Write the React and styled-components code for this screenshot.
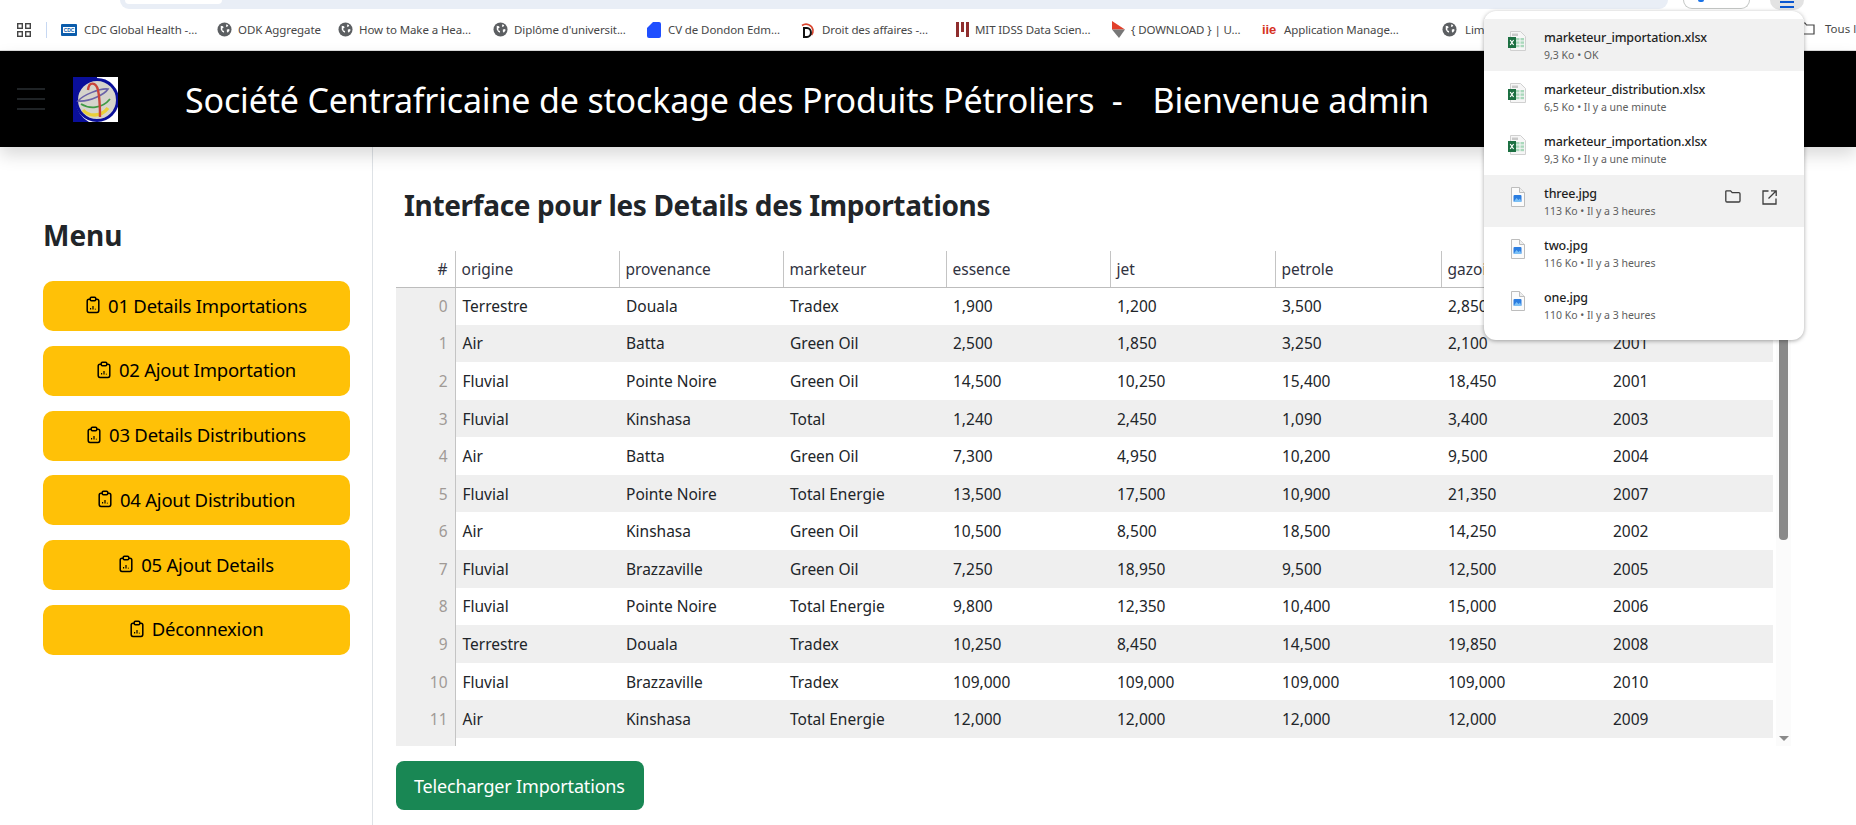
import React from 'react';
import styled, { createGlobalStyle } from 'styled-components';

const GlobalStyle = createGlobalStyle`
  html, body {
    margin: 0;
    height: 100%;
    overflow: hidden;
    background: #fff;
    font-family: "Noto Sans", "Open Sans", sans-serif;
    color: #212529;
  }
  * { box-sizing: border-box; }
`;

const TopStrip = styled.div`
  height: 10px;
  display: flex;
  align-items: flex-start;
  overflow: hidden;
  background: #fff;
  padding-left: 120px;
`;

const AddressPill = styled.div`
  width: 1548px;
  height: 9px;
  background: #e9eef6;
  border-radius: 0 0 14px 14px;
  padding-left: 5px;
`;

const AddressChip = styled.div`
  width: 97px;
  height: 4px;
  background: #fff;
  border-radius: 0 0 10px 10px;
`;

const ProfileChip = styled.div`
  width: 67px;
  height: 9px;
  margin-left: 15px;
  border: 1px solid #c4c7c5;
  border-top: none;
  border-radius: 0 0 14px 14px;
  position: relative;
  &::after {
    content: '';
    position: absolute;
    left: 14px;
    top: 0;
    width: 6px;
    height: 2px;
    background: #1a73e8;
    border-radius: 0 0 3px 3px;
  }
`;

const MenuCircle = styled.div`
  width: 34px;
  height: 10px;
  margin-left: 20px;
  background: #e3e3e3;
  border-radius: 0 0 17px 17px;
  display: flex;
  flex-direction: column;
  align-items: center;
  gap: 3px;
  padding-top: 1px;
  &::before, &::after {
    content: '';
    width: 14px;
    height: 2px;
    background: #0b57d0;
  }
`;

const BookmarkBar = styled.div`
  height: 41px;
  padding-bottom: 1px;
  display: flex;
  align-items: center;
  padding-left: 17px;
  border-bottom: 1px solid #dcdcdc;
  background: #fff;
  white-space: nowrap;
`;

const Separator = styled.div`
  width: 1px;
  height: 16px;
  background: #c7d8f2;
  margin: 0 14px 0 15px;
`;

const Bookmark = styled.div`
  width: ${({ $w }) => $w}px;
  flex: none;
  display: flex;
  align-items: center;
  gap: ${({ $gap }) => $gap || 5}px;
  font-size: 11.5px;
  letter-spacing: -0.1px;
  color: #474747;
  svg {
    flex: none;
  }
`;

const AllBookmarks = styled.div`
  position: absolute;
  left: 1799px;
  top: 21px;
  display: flex;
  align-items: center;
  gap: 10px;
  font-size: 11.5px;
  color: #474747;
  white-space: nowrap;
`;

const Header = styled.header`
  height: 96px;
  background: #000;
  display: flex;
  align-items: center;
  padding-left: 17px;
  position: relative;
  z-index: 1;
  box-shadow: 0 8px 16px rgba(0, 0, 0, 0.15);
`;

const Burger = styled.div`
  width: 28px;
  height: 22px;
  margin-right: 28px;
  display: flex;
  flex-direction: column;
  justify-content: space-between;
  span {
    height: 2px;
    background: #1f2326;
  }
`;

const Title = styled.h1`
  margin: 2px 0 0 67px;
  font-size: 34px;
  font-weight: 400;
  color: #fff;
  white-space: pre;
  letter-spacing: -0.17px;
`;

const Welcome = styled.span`
  margin-left: 4px;
`;

const Main = styled.main`
  display: flex;
  height: 678px;
`;

const Sidebar = styled.aside`
  width: 373px;
  flex: none;
  border-right: 1px solid #dee2e6;
  padding: 71px 22px 0 43px;
`;

const MenuTitle = styled.h2`
  margin: 0 0 29px 0;
  font-size: 28px;
  line-height: 34px;
  font-weight: 700;
  color: #212529;
`;

const MenuList = styled.nav`
  display: flex;
  flex-direction: column;
  gap: 14.8px;
`;

const MenuButton = styled.a`
  height: 50px;
  padding-bottom: 2px;
  background: #ffc107;
  border-radius: 10px;
  color: #000;
  font-size: 18.5px;
  display: flex;
  align-items: center;
  justify-content: center;
  gap: 8px;
  letter-spacing: -0.22px;
`;

const Content = styled.section`
  flex: 1;
  min-width: 0;
  padding: 41px 0 0 23px;
`;

const PageTitle = styled.h2`
  margin: 0 0 29px 8px;
  font-size: 28px;
  line-height: 34px;
  font-weight: 700;
  letter-spacing: -0.35px;
  color: #212529;
`;

const TableFrame = styled.div`
  display: flex;
  height: 495px;
  overflow: hidden;
`;

const DataTable = styled.table`
  width: 1377px;
  flex: none;
  border-collapse: collapse;
  table-layout: fixed;
  font-size: 15.5px;
  align-self: flex-start;
`;

const HeadCell = styled.th`
  height: 36px;
  padding: 0 6px;
  font-weight: 400;
  text-align: ${({ $index }) => ($index ? 'right' : 'left')};
  padding-right: ${({ $index }) => ($index ? '7px' : '6px')};
  border-left: ${({ $index }) => ($index ? 'none' : '1px solid #c4c4c4')};
  border-bottom: 1px solid #bdbdbd;
  color: #31333f;
  white-space: nowrap;
  overflow: hidden;
`;

const Row = styled.tr`
  height: 37.58px;
  background: ${({ $striped }) => ($striped ? '#efefef' : '#fff')};
`;

const Cell = styled.td`
  padding: 0 7px;
  color: #212529;
  white-space: nowrap;
  overflow: hidden;
`;

const IndexCell = styled.td`
  padding: 0 7px;
  text-align: right;
  color: #a09a96;
  background: #efefef;
  border-right: 1px solid #c4c4c4;
`;

const ScrollTrack = styled.div`
  width: 15px;
  margin-left: 3px;
  background: #fbfbfb;
  position: relative;
`;

const ScrollThumb = styled.div`
  position: absolute;
  left: 3px;
  top: 15px;
  width: 9px;
  height: 274px;
  background: #8a8a8a;
  border-radius: 0 0 4px 4px;
`;

const ScrollArrow = styled.div`
  position: absolute;
  left: 3px;
  bottom: 5px;
  border-left: 5px solid transparent;
  border-right: 5px solid transparent;
  border-top: 5px solid #8a8a8a;
`;

const DownloadButton = styled.a`
  display: inline-flex;
  align-items: center;
  height: 49px;
  margin-top: 15px;
  padding: 0 19px 0 18px;
  background: #198754;
  color: #fff;
  border-radius: 8px;
  font-size: 18px;
  letter-spacing: -0.17px;
`;

const DownloadsPanel = styled.div`
  position: absolute;
  left: 1484px;
  top: 11px;
  width: 320px;
  height: 329px;
  padding: 8px 0;
  background: #fff;
  border-radius: 12px;
  box-shadow: 0 1px 4px rgba(0, 0, 0, 0.35);
  z-index: 2;
`;

const DownloadItem = styled.div`
  height: 52px;
  display: flex;
  padding: 12px 27px 0 24px;
  gap: 18px;
  background: ${({ $active }) => ($active ? '#f1f1f1' : 'transparent')};
`;

const FileText = styled.div`
  margin-top: -2px;
  flex: 1;
  min-width: 0;
`;

const FileName = styled.div`
  font-size: 12.5px;
  line-height: 18px;
  font-weight: 500;
  color: #1f1f1f;
  letter-spacing: -0.15px;
`;

const FileMeta = styled.div`
  font-size: 10.5px;
  line-height: 16px;
  color: #5e5e5e;
`;

const ItemActions = styled.div`
  display: flex;
  gap: 21px;
  align-items: flex-start;
  padding-top: 3px;
`;

const columns = ['origine', 'provenance', 'marketeur', 'essence', 'jet', 'petrole', 'gazoil', 'annee'];
const widths = [59, 164, 164, 163, 164, 165, 166, 165, 167];

const rows = [
  ['Terrestre', 'Douala', 'Tradex', '1,900', '1,200', '3,500', '2,850', '2000'],
  ['Air', 'Batta', 'Green Oil', '2,500', '1,850', '3,250', '2,100', '2001'],
  ['Fluvial', 'Pointe Noire', 'Green Oil', '14,500', '10,250', '15,400', '18,450', '2001'],
  ['Fluvial', 'Kinshasa', 'Total', '1,240', '2,450', '1,090', '3,400', '2003'],
  ['Air', 'Batta', 'Green Oil', '7,300', '4,950', '10,200', '9,500', '2004'],
  ['Fluvial', 'Pointe Noire', 'Total Energie', '13,500', '17,500', '10,900', '21,350', '2007'],
  ['Air', 'Kinshasa', 'Green Oil', '10,500', '8,500', '18,500', '14,250', '2002'],
  ['Fluvial', 'Brazzaville', 'Green Oil', '7,250', '18,950', '9,500', '12,500', '2005'],
  ['Fluvial', 'Pointe Noire', 'Total Energie', '9,800', '12,350', '10,400', '15,000', '2006'],
  ['Terrestre', 'Douala', 'Tradex', '10,250', '8,450', '14,500', '19,850', '2008'],
  ['Fluvial', 'Brazzaville', 'Tradex', '109,000', '109,000', '109,000', '109,000', '2010'],
  ['Air', 'Kinshasa', 'Total Energie', '12,000', '12,000', '12,000', '12,000', '2009'],
];

const menu = [
  '01 Details Importations',
  '02 Ajout Importation',
  '03 Details Distributions',
  '04 Ajout Distribution',
  '05 Ajout Details',
  'Déconnexion',
];

const downloads = [
  { name: 'marketeur_importation.xlsx', meta: '9,3 Ko • OK', kind: 'xls', active: true },
  { name: 'marketeur_distribution.xlsx', meta: '6,5 Ko • Il y a une minute', kind: 'xls' },
  { name: 'marketeur_importation.xlsx', meta: '9,3 Ko • Il y a une minute', kind: 'xls' },
  { name: 'three.jpg', meta: '113 Ko • Il y a 3 heures', kind: 'jpg', active: true, actions: true },
  { name: 'two.jpg', meta: '116 Ko • Il y a 3 heures', kind: 'jpg' },
  { name: 'one.jpg', meta: '110 Ko • Il y a 3 heures', kind: 'jpg' },
];

const ClipboardIcon = () => (
  <svg width="14" height="18" viewBox="0 0 14 18" fill="none" stroke="#000" strokeWidth="1.5">
    <path d="M4.2 3.2H3A1.8 1.8 0 0 0 1.2 5v9.6A1.8 1.8 0 0 0 3 16.4h8a1.8 1.8 0 0 0 1.8-1.8V5A1.8 1.8 0 0 0 11 3.2H9.8" />
    <rect x="4.2" y="1.2" width="5.6" height="3.6" rx="1.2" />
    <path d="M4.6 13.6v-1.6M7 13.6V10M9.4 13.6v-.8" strokeWidth="1.2" />
  </svg>
);

const GridIcon = () => (
  <svg width="14" height="14" viewBox="0 0 14 14" fill="none" stroke="#444" strokeWidth="1.4">
    <rect x="0.7" y="0.7" width="4.6" height="4.6" />
    <rect x="8.7" y="0.7" width="4.6" height="4.6" />
    <rect x="0.7" y="8.7" width="4.6" height="4.6" />
    <rect x="8.7" y="8.7" width="4.6" height="4.6" />
  </svg>
);

const GlobeIcon = () => (
  <svg width="15" height="15" viewBox="0 0 16 16">
    <circle cx="8" cy="8" r="7.5" fill="#5c5f62" />
    <path d="M4 4l2.5.5.5 1.5-1.5 1L6 9l1.5.5v2L5.5 10.5 4 8zM10 2.5l2 1-1 1.5-1.5 0zM10.5 8l2.5-.5.3 1.5-1.8 2.5-1-1.5z" fill="#fff" />
  </svg>
);

const CdcIcon = () => (
  <svg width="16" height="12" viewBox="0 0 16 12">
    <rect width="16" height="12" rx="1" fill="#0b5cab" />
    <rect x="2" y="3" width="12" height="6" fill="#fff" />
    <text x="8" y="8" fontSize="5" fontWeight="700" textAnchor="middle" fontFamily="Liberation Sans, sans-serif" fill="#0b5cab">CDC</text>
  </svg>
);

const DocBlueIcon = () => (
  <svg width="14" height="16" viewBox="0 0 14 16">
    <path d="M6 0h6a2 2 0 0 1 2 2v12a2 2 0 0 1-2 2H2a2 2 0 0 1-2-2V6z" fill="#1f4fff" />
  </svg>
);

const DroitIcon = () => (
  <svg width="15" height="16" viewBox="0 0 15 16" fill="none">
    <path d="M2 3.5A7 7 0 0 1 13 8a7 7 0 0 1-1.4 5" stroke="#d9452e" strokeWidth="1.6" />
    <path d="M4 6h3a3.5 4 0 0 1 0 9H4z" stroke="#111" strokeWidth="2" />
  </svg>
);

const MitIcon = () => (
  <svg width="13" height="15" viewBox="0 0 13 15" fill="#8f2d2d">
    <rect x="0" y="0" width="3" height="15" />
    <rect x="5" y="0" width="3" height="10" />
    <rect x="10" y="0" width="3" height="15" />
  </svg>
);

const DownloadSiteIcon = () => (
  <svg width="14" height="17" viewBox="0 0 14 17">
    <path d="M1 0l13 8.5L1 8.5z" fill="#e2402b" />
    <path d="M14 8.5L8 17 1 8.5z" fill="#777" />
  </svg>
);

const IieIcon = () => (
  <svg width="16" height="13" viewBox="0 0 16 13">
    <text x="0" y="11" fontSize="13" fontWeight="700" fontFamily="Liberation Sans, sans-serif" fill="#d6321f">iie</text>
  </svg>
);

const FolderSmall = () => (
  <svg width="16" height="13" viewBox="0 0 16 13" fill="none" stroke="#444" strokeWidth="1.2">
    <path d="M1 1h5l1.5 2H15v9H1z" />
  </svg>
);

const ExcelIcon = () => (
  <svg width="18" height="20" viewBox="0 0 18 20">
    <path d="M2.5.5h10l5 5v14h-15z" fill="#f6f6f6" stroke="#d0d0d0" />
    <rect x="4" y="2.5" width="6" height="2.5" fill="#c9c9c9" />
    <g fill="#a9d8bb">
      <rect x="8" y="7" width="3.5" height="2.4" />
      <rect x="12.5" y="7" width="3.5" height="2.4" />
      <rect x="8" y="10.4" width="3.5" height="2.4" />
      <rect x="12.5" y="10.4" width="3.5" height="2.4" />
      <rect x="8" y="13.8" width="3.5" height="2.4" />
      <rect x="12.5" y="13.8" width="3.5" height="2.4" />
    </g>
    <rect x="0" y="6" width="8" height="11" fill="#1c7042" />
    <path d="M2.2 9l3.4 5M5.6 9l-3.4 5" stroke="#fff" strokeWidth="1.2" />
  </svg>
);

const ImageFileIcon = () => (
  <svg width="18" height="20" viewBox="0 0 18 20">
    <path d="M3.5.5h8l5 5v14h-13z" fill="#fbfbfb" stroke="#bdbdbd" />
    <path d="M11.5.5v5h5" fill="#eee" stroke="#bdbdbd" />
    <rect x="5.5" y="8" width="8" height="7" rx="1" fill="#2b7de0" />
    <path d="M5.5 15l3-4 2 2 1.5-1.5 1.5 3.5z" fill="#7cc0f5" />
  </svg>
);

const FolderAction = () => (
  <svg width="16" height="13" viewBox="0 0 16 13" fill="none" stroke="#3c3c3c" strokeWidth="1.3">
    <path d="M.8 1.6a.8.8 0 0 1 .8-.8h4l1.6 1.8h6.6a1.2 1.2 0 0 1 1.2 1.2v7a1.2 1.2 0 0 1-1.2 1.2H2a1.2 1.2 0 0 1-1.2-1.2z" />
  </svg>
);

const OpenAction = () => (
  <svg width="15" height="15" viewBox="0 0 15 15" fill="none" stroke="#3c3c3c" strokeWidth="1.3">
    <path d="M6.5 1H1v13h13V8.5" />
    <path d="M9 .8h5.2V6M14 1L6.5 8.5" />
  </svg>
);

const Logo = () => (
  <svg width="45" height="45" viewBox="0 0 45 45">
    <rect width="45" height="45" fill="#fff" />
    <path d="M0 0h24v2C10 4 3 14 3 24c0 9 5 16 13 21H0z" fill="#0a0f9a" />
    <circle cx="24" cy="23" r="20.5" fill="#d6d4cc" stroke="#0a0f9a" strokeWidth="3" />
    <path d="M10 33c6 7 18 7 25-2" fill="none" stroke="#e9cf3a" strokeWidth="3.4" />
    <path d="M8 27c8 5 21 5 29-5" fill="none" stroke="#3f9a45" strokeWidth="1.8" />
    <path d="M5 24c5-6 22-13 30-12-3 5-18 13-30 12z" fill="none" stroke="#6a62a8" strokeWidth="1.6" />
    <path d="M15 13c1-9 8-8 10 0 2 9 2 18 2 27" fill="none" stroke="#c9443a" strokeWidth="2.4" />
  </svg>
);

const bookmarks = [
  { w: 156, icon: <CdcIcon />, label: 'CDC Global Health -...', gap: 7 },
  { w: 121, icon: <GlobeIcon />, label: 'ODK Aggregate', gap: 6 },
  { w: 155, icon: <GlobeIcon />, label: 'How to Make a Hea...', gap: 6 },
  { w: 154, icon: <GlobeIcon />, label: "Diplôme d'universit...", gap: 6 },
  { w: 153, icon: <DocBlueIcon />, label: 'CV de Dondon Edm...', gap: 7 },
  { w: 156, icon: <DroitIcon />, label: 'Droit des affaires -...', gap: 7 },
  { w: 155, icon: <MitIcon />, label: 'MIT IDSS Data Scien...', gap: 6 },
  { w: 151, icon: <DownloadSiteIcon />, label: '{ DOWNLOAD } | U...', gap: 6 },
  { w: 180, icon: <IieIcon />, label: 'Application Manage...', gap: 6 },
  { w: 120, icon: <GlobeIcon />, label: 'LimeTorrents', gap: 8 },
];

const App = () => (
  <>
    <GlobalStyle />
    <TopStrip>
      <AddressPill>
        <AddressChip />
      </AddressPill>
      <ProfileChip />
      <MenuCircle />
    </TopStrip>

    <BookmarkBar>
      <GridIcon />
      <Separator />
      {bookmarks.map((b) => (
        <Bookmark key={b.label} $w={b.w} $gap={b.gap}>
          {b.icon}
          <span>{b.label}</span>
        </Bookmark>
      ))}
    </BookmarkBar>
    <AllBookmarks>
      <FolderSmall />
      <span>Tous les favoris</span>
    </AllBookmarks>

    <Header>
      <Burger>
        <span />
        <span />
        <span />
      </Burger>
      <Logo />
      <Title>Société Centrafricaine de stockage des Produits Pétroliers  -  <Welcome> Bienvenue admin</Welcome></Title>
    </Header>

    <Main>
      <Sidebar>
        <MenuTitle>Menu</MenuTitle>
        <MenuList>
          {menu.map((item) => (
            <MenuButton key={item}>
              <ClipboardIcon />
              {item}
            </MenuButton>
          ))}
        </MenuList>
      </Sidebar>

      <Content>
        <PageTitle>Interface pour les Details des Importations</PageTitle>
        <TableFrame>
          <DataTable>
            <colgroup>
              {widths.map((w, i) => (
                <col key={i} width={w} />
              ))}
            </colgroup>
            <thead>
              <tr>
                <HeadCell $index>#</HeadCell>
                {columns.map((c) => (
                  <HeadCell key={c}>{c}</HeadCell>
                ))}
              </tr>
            </thead>
            <tbody>
              {rows.map((row, i) => (
                <Row key={i} $striped={i % 2 === 1}>
                  <IndexCell>{i}</IndexCell>
                  {row.map((value, j) => (
                    <Cell key={j}>{value}</Cell>
                  ))}
                  <Cell />
                </Row>
              ))}
              <Row>
                <IndexCell />
                <Cell colSpan={9} />
              </Row>
            </tbody>
          </DataTable>
          <ScrollTrack>
            <ScrollThumb />
            <ScrollArrow />
          </ScrollTrack>
        </TableFrame>
        <DownloadButton>Telecharger Importations</DownloadButton>
      </Content>
    </Main>

    <DownloadsPanel>
      {downloads.map((d, i) => (
        <DownloadItem key={i} $active={d.active}>
          {d.kind === 'xls' ? <ExcelIcon /> : <ImageFileIcon />}
          <FileText>
            <FileName>{d.name}</FileName>
            <FileMeta>{d.meta}</FileMeta>
          </FileText>
          {d.actions && (
            <ItemActions>
              <FolderAction />
              <OpenAction />
            </ItemActions>
          )}
        </DownloadItem>
      ))}
    </DownloadsPanel>
  </>
);

export default App;
